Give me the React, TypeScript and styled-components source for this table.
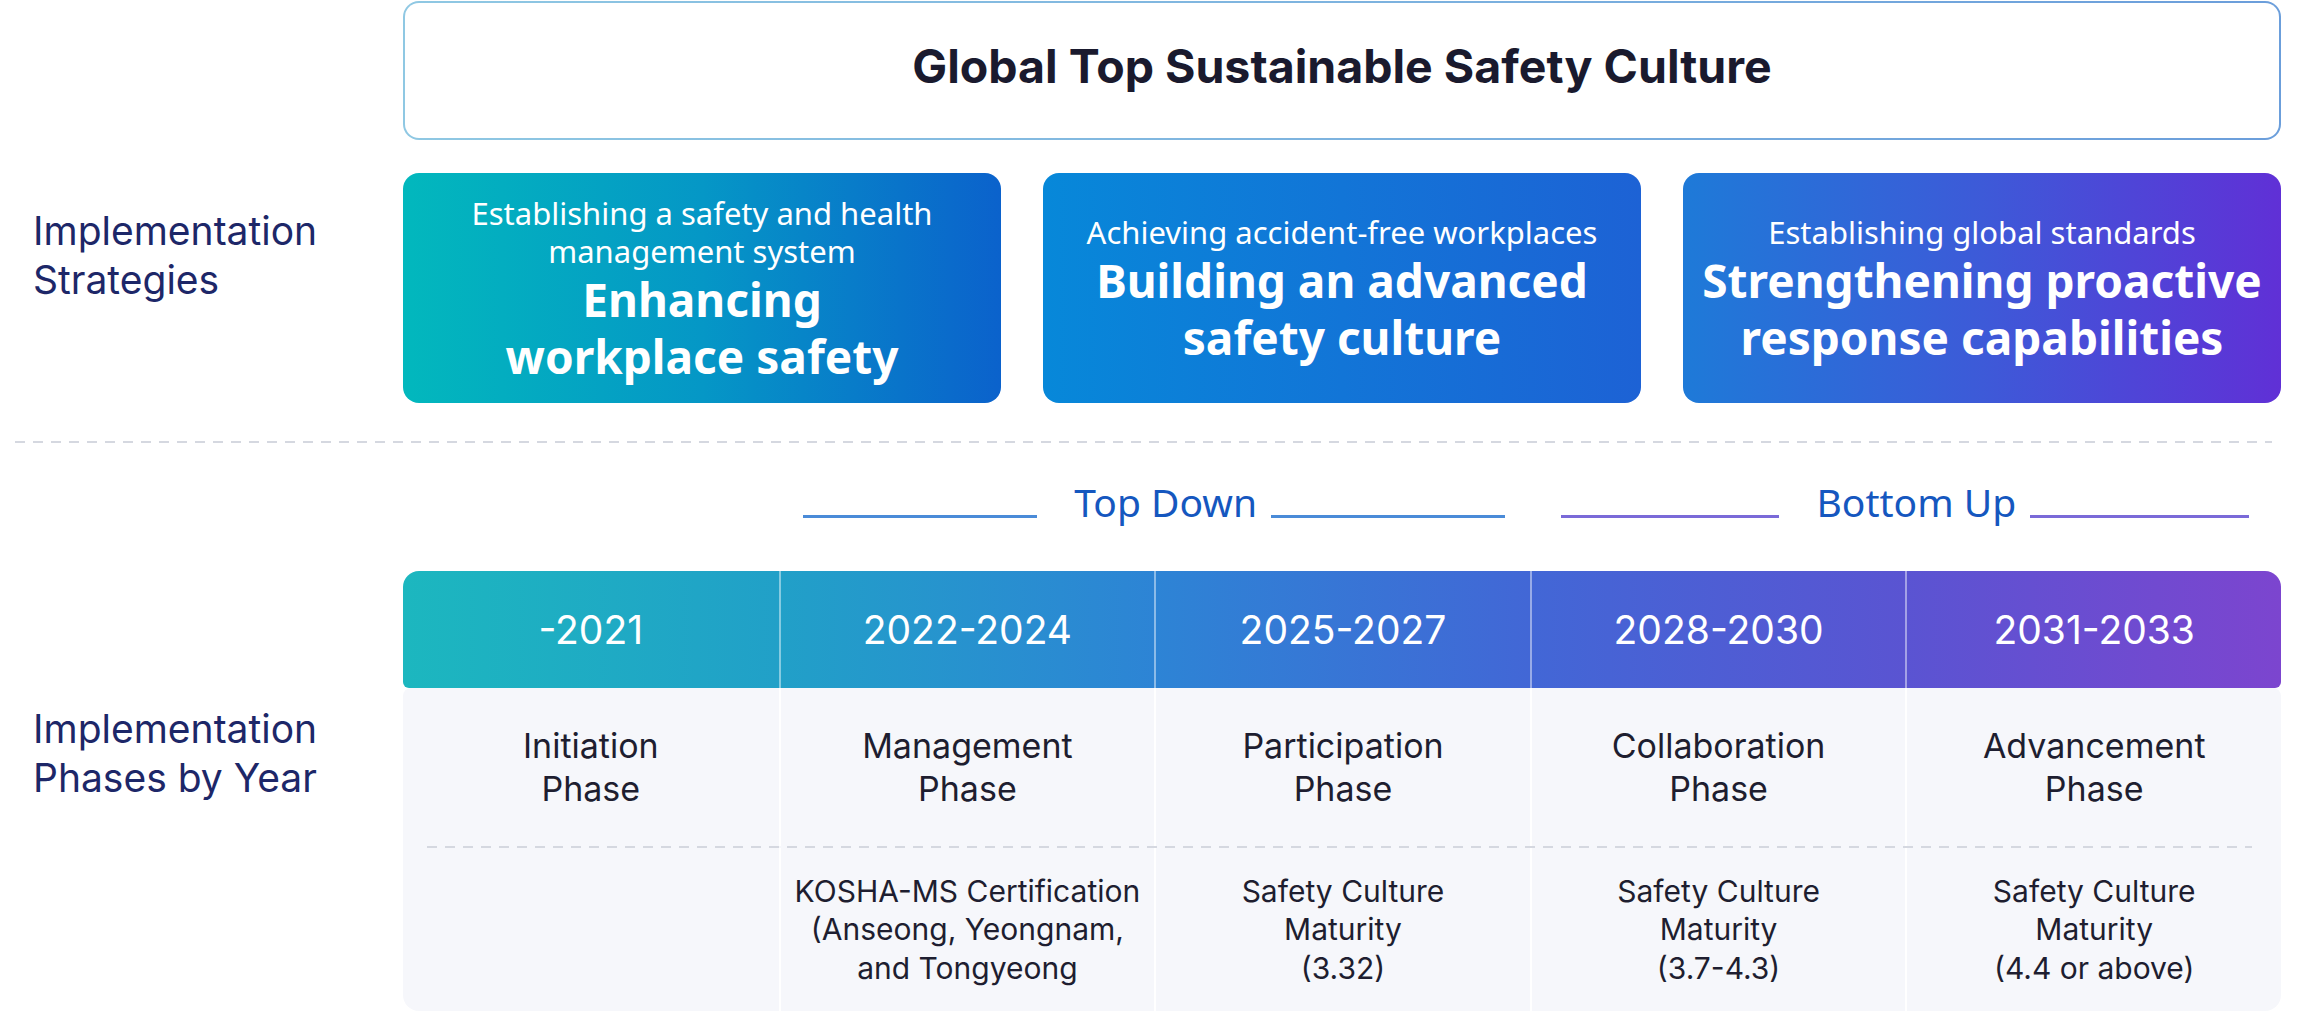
import React from 'react';
import styled, {createGlobalStyle} from 'styled-components';

/* -------------------------------------------------------------------------- */
/*                                   Styles                                   */
/* -------------------------------------------------------------------------- */
const GlobalStyle = createGlobalStyle`
  html, body {
    margin: 0;
    padding: 0;
    background: #ffffff;
  }

  * {
    box-sizing: border-box;
  }
`;

const Page = styled.div`
  width: 2309px;
  padding-top: 1px;
  font-family: Inter, 'Noto Sans', sans-serif;
  color: #1e1e30;
`;

const Section = styled.div`
  display: grid;
  grid-template-columns: 403px 1878px;
`;

const Label = styled.div<{$top: number}>`
  padding: ${({$top}) => $top}px 0 0 33px;
  font-family: Inter, sans-serif;
  font-size: 39px;
  line-height: 49px;
  color: #1d2768;
`;

const TopBox = styled.div`
  height: 139px;
  display: flex;
  align-items: center;
  justify-content: center;
  padding-bottom: 10px;
  border: 2px solid transparent;
  border-radius: 16px;
  background:
    linear-gradient(#ffffff, #ffffff) padding-box,
    linear-gradient(90deg, #8fc8e3, #6b9edb) border-box;
`;

const Title = styled.h1`
  margin: 0;
  font-family: Inter, sans-serif;
  font-size: 46.5px;
  font-weight: 700;
  color: #1a1a2e;
`;

const Cards = styled.div`
  display: grid;
  grid-template-columns: repeat(3, 1fr);
  column-gap: 42px;
  margin-top: 33px;
`;

const Card = styled.div<{$bg: string}>`
  height: 230px;
  display: flex;
  flex-direction: column;
  align-items: center;
  justify-content: center;
  padding: 2px 12px 0;
  border-radius: 16px;
  background: ${({$bg}) => $bg};
  color: #ffffff;
  text-align: center;
  font-family: 'Noto Sans', sans-serif;
`;

const CardSub = styled.p`
  margin: 0;
  font-size: 31px;
  line-height: 38px;
`;

const CardTitle = styled.h2`
  margin: 1px 0 0;
  font-size: 46px;
  font-weight: 700;
  line-height: 57px;
`;

const Divider = styled.div`
  width: 2257px;
  height: 2px;
  margin: 38px 0 0 15px;
  background-image: repeating-linear-gradient(90deg, #d5d8e0 0 10px, transparent 10px 18px);
`;

const FlowRow = styled.div`
  display: grid;
  grid-template-columns: repeat(5, 1fr);
  height: 53px;
  margin-top: 32px;
`;

const Flow = styled.div<{$col: string}>`
  grid-column: ${({$col}) => $col};
  display: flex;
  align-items: flex-end;
  justify-content: center;
`;

const FlowLine = styled.span<{$width: number; $color: string}>`
  width: ${({$width}) => $width}px;
  height: 3px;
  margin-bottom: 10px;
  background: ${({$color}) => $color};
`;

const FlowText = styled.span`
  margin: 0 14px 0 37px;
  font-family: 'Noto Sans', sans-serif;
  font-size: 39px;
  line-height: 53px;
  color: #1557bf;
`;

const Table = styled.div`
  margin-top: 43px;
`;

const HeadRow = styled.div`
  display: grid;
  grid-template-columns: repeat(5, 1fr);
  height: 117px;
  border-radius: 16px 16px 6px 6px;
  background: linear-gradient(90deg, #1cb7bf 0%, #21a0c8 20%, #2d84d5 40%, #4267d6 60%, #5a54d2 80%, #7c45cf 100%);
  overflow: hidden;
`;

const HeadCell = styled.div`
  display: flex;
  align-items: center;
  justify-content: center;
  font-size: 39px;
  color: #ffffff;

  & + & {
    border-left: 2px solid rgba(255, 255, 255, 0.45);
  }
`;

const Body = styled.div`
  display: grid;
  grid-template-columns: repeat(5, 1fr);
  grid-template-rows: 158px 2px 163px;
  border-radius: 8px 8px 16px 16px;
  background: #f6f7fb;
  overflow: hidden;
`;

const BodyCell = styled.div<{$small?: boolean; $first?: boolean}>`
  display: flex;
  align-items: center;
  justify-content: center;
  text-align: center;
  font-size: ${({$small}) => ($small ? '30px' : '34px')};
  line-height: ${({$small}) => ($small ? '38.5px' : '43px')};
  color: #1e1e30;
  border-left: ${({$first}) => ($first ? 'none' : '2px solid #ffffff')};
`;

const BodyDash = styled.div`
  grid-column: 1 / -1;
  margin: 0 29px 0 24px;
  background-image: repeating-linear-gradient(90deg, #d5d8e0 0 10px, transparent 10px 18px);
`;

/* -------------------------------------------------------------------------- */
/*                                    Data                                    */
/* -------------------------------------------------------------------------- */
const strategies = [
  {
    sub: ['Establishing a safety and health', 'management system'],
    title: ['Enhancing', 'workplace safety'],
    bg: 'linear-gradient(90deg, #02b8bd 0%, #0597c6 50%, #0b62cc 100%)',
  },
  {
    sub: ['Achieving accident-free workplaces'],
    title: ['Building an advanced', 'safety culture'],
    bg: 'linear-gradient(90deg, #0788d9 0%, #1d62d5 100%)',
  },
  {
    sub: ['Establishing global standards'],
    title: ['Strengthening proactive', 'response capabilities'],
    bg: 'linear-gradient(90deg, #1e7ad8 0%, #3d5ad8 50%, #6030d6 100%)',
  },
];

const phases = [
  {years: '-2021', name: ['Initiation', 'Phase'], detail: []},
  {
    years: '2022-2024',
    name: ['Management', 'Phase'],
    detail: ['KOSHA-MS Certification', '(Anseong, Yeongnam,', 'and Tongyeong'],
  },
  {years: '2025-2027', name: ['Participation', 'Phase'], detail: ['Safety Culture', 'Maturity', '(3.32)']},
  {years: '2028-2030', name: ['Collaboration', 'Phase'], detail: ['Safety Culture', 'Maturity', '(3.7-4.3)']},
  {
    years: '2031-2033',
    name: ['Advancement', 'Phase'],
    detail: ['Safety Culture', 'Maturity', '(4.4 or above)'],
  },
];

const lines = (items: string[]) =>
  items.map((line, i) => (
    <React.Fragment key={line}>
      {i > 0 && <br />}
      {line}
    </React.Fragment>
  ));

/* -------------------------------------------------------------------------- */
/*                                     App                                    */
/* -------------------------------------------------------------------------- */
const App: React.FC = () => (
  <Page>
    <GlobalStyle />
    <Section>
      <span />
      <TopBox>
        <Title>Global Top Sustainable Safety Culture</Title>
      </TopBox>
      <Label $top={66}>
        Implementation
        <br />
        Strategies
      </Label>
      <Cards>
        {strategies.map(item => (
          <Card key={item.title[0]} $bg={item.bg}>
            <CardSub>{lines(item.sub)}</CardSub>
            <CardTitle>{lines(item.title)}</CardTitle>
          </Card>
        ))}
      </Cards>
    </Section>
    <Divider />
    <Section>
      <span />
      <FlowRow>
        <Flow $col="2 / 4">
          <FlowLine $width={234} $color="#4a8bd8" />
          <FlowText>Top Down</FlowText>
          <FlowLine $width={234} $color="#4a8bd8" />
        </Flow>
        <Flow $col="4 / 6">
          <FlowLine $width={218} $color="#7a6ad8" />
          <FlowText>Bottom Up</FlowText>
          <FlowLine $width={219} $color="#7a6ad8" />
        </Flow>
      </FlowRow>
      <Label $top={176}>
        Implementation
        <br />
        Phases by Year
      </Label>
      <Table>
        <HeadRow>
          {phases.map(p => (
            <HeadCell key={p.years}>{p.years}</HeadCell>
          ))}
        </HeadRow>
        <Body>
          {phases.map((p, i) => (
            <BodyCell key={p.years} $first={i === 0}>
              <div>{lines(p.name)}</div>
            </BodyCell>
          ))}
          <BodyDash />
          {phases.map((p, i) => (
            <BodyCell key={`${p.years}-detail`} $first={i === 0} $small>
              <div>{lines(p.detail)}</div>
            </BodyCell>
          ))}
        </Body>
      </Table>
    </Section>
  </Page>
);

export default App;
